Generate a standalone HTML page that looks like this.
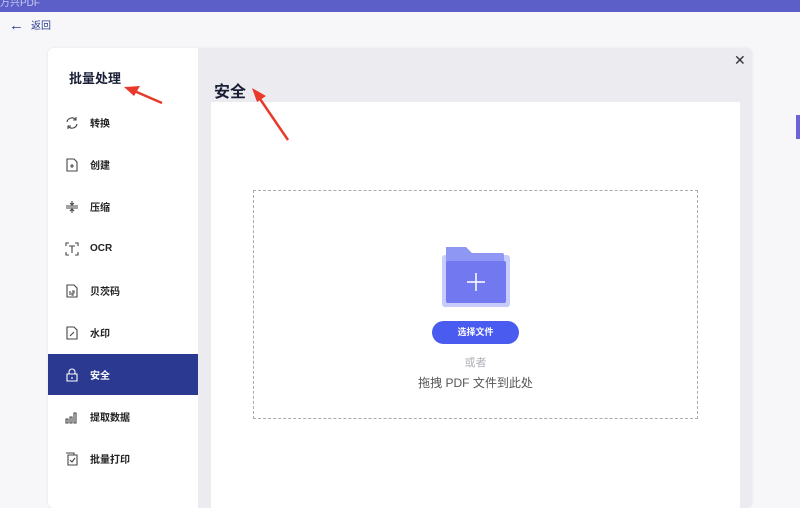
<!DOCTYPE html>
<html><head><meta charset="utf-8"><style>
*{margin:0;padding:0;box-sizing:border-box}
body{width:800px;height:500px;overflow:hidden;background:#f7f7fa;font-family:"Liberation Sans","Noto Sans CJK SC",sans-serif;position:relative}
.top{position:absolute;left:0;top:0;width:800px;height:12px;background:#5b5fc7}
.top span{position:absolute;top:-6px;color:#c8caf0;font-size:10px}
.back{position:absolute;left:9px;top:17px;font-size:10px;color:#2b3a8c}
.back b{font-size:15px;font-weight:bold;margin-right:7px;vertical-align:-1px}
.modal{position:absolute;left:48px;top:48px;width:704px;height:460px;background:#ebebf0;border-radius:6px;overflow:hidden;box-shadow:0 0 3px rgba(0,0,0,.08)}
.side{position:absolute;left:0;top:0;width:150px;height:100%;background:#fff}
.side h2{position:absolute;left:21px;top:20px;font-size:13px;color:#1a1f36;font-weight:bold}
.item{position:absolute;left:0;width:150px;height:41px;display:flex;align-items:center;padding-left:17px;font-size:10px;font-weight:bold;color:#222}
.item svg{width:14px;height:14px;margin-right:11px;fill:none;stroke:#444;stroke-width:1.1}
.item.act{background:#2b3990;color:#fff}
.item.act svg{stroke:#fff}
.title{position:absolute;left:166px;top:30px;font-size:16px;font-weight:bold;color:#1a1f36}
.close{position:absolute;left:686px;top:4px;font-size:14px;color:#333}
.panel{position:absolute;left:163px;top:54px;width:529px;height:420px;background:#fff}
.drop{position:absolute;left:42px;top:88px;width:445px;height:229px;border:1px dashed #aaa}
.btn{position:absolute;left:178px;top:130px;width:87px;height:23px;border-radius:12px;background:#4a5cf0;color:#fff;font-size:9px;font-weight:bold;text-align:center;line-height:23px}
.or{position:absolute;left:0;width:100%;text-align:center;top:163px;font-size:11px;color:#b0b0b8}
.dr{position:absolute;left:0;width:100%;text-align:center;top:183px;font-size:12px;color:#555}
.arrow{position:absolute}
</style></head><body>
<div class="top"><span style="left:0">万兴PDF</span></div>
<div class="back"><b>←</b>返回</div>
<div style="position:absolute;left:796px;top:115px;width:4px;height:24px;background:#6b63d6"></div>
<div class="modal">
 <div class="side">
  <h2>批量处理</h2>
  <div class="item" style="top:54px"><svg viewBox="0 0 14 14"><path d="M2 6a5 5 0 0 1 9-2M12 8a5 5 0 0 1-9 2M11 1v3H8M3 13v-3h3"/></svg>转换</div>
  <div class="item" style="top:96px"><svg viewBox="0 0 14 14"><path d="M2 1h7l3 3v9H2zM5 8h4M7 6v4"/></svg>创建</div>
  <div class="item" style="top:138px"><svg viewBox="0 0 14 14"><path d="M1 6h12M1 8h12M7 1v4M7 9v4M5 3l2 2 2-2M5 11l2-2 2 2"/></svg>压缩</div>
  <div class="item" style="top:180px"><svg viewBox="0 0 14 14"><path d="M1 4V1h3M10 1h3v3M13 10v3h-3M4 13H1v-3M4 4h6M7 4v7"/></svg>OCR</div>
  <div class="item" style="top:222px"><svg viewBox="0 0 14 14"><path d="M2 1h7l3 3v9H2zM5 7v4M7 7h2v2H7v2h2"/></svg>贝茨码</div>
  <div class="item" style="top:264px"><svg viewBox="0 0 14 14"><path d="M2 1h7l3 3v9H2zM5 10l4-4"/></svg>水印</div>
  <div class="item act" style="top:306px"><svg viewBox="0 0 14 14"><path d="M2 6h10v7H2zM4 6V4a3 3 0 0 1 6 0v2M7 9v2"/></svg>安全</div>
  <div class="item" style="top:348px"><svg viewBox="0 0 14 14"><path d="M1 9h2v4H1zM5 7h2v6H5zM9 3h2v10H9z"/></svg>提取数据</div>
  <div class="item" style="top:390px"><svg viewBox="0 0 14 14"><path d="M1 1h8v2M3 3h9v10H3zM5 8l2 2 3-4"/></svg>批量打印</div>
 </div>
 <div class="title">安全</div>
 <div class="close">✕</div>
 <div class="panel">
  <div class="drop">
   <svg style="position:absolute;left:186px;top:52px" width="72" height="66" viewBox="0 0 72 66">
    <rect x="2" y="12" width="68" height="52" rx="3" fill="#c7ccfb"/>
    <path d="M6 4h20l6 6h30a2 2 0 0 1 2 2v42H6z" fill="#8f97f5"/>
    <rect x="6" y="18" width="60" height="42" rx="2" fill="#7279f0"/>
    <path d="M36 30v18M27 39h18" stroke="#fff" stroke-width="1.5"/>
   </svg>
   <div class="btn">选择文件</div>
   <div class="or">或者</div>
   <div class="dr">拖拽 PDF 文件到此处</div>
  </div>
 </div>
</div>
<svg class="arrow" style="left:120px;top:82px" width="45" height="25"><path d="M42 21L12 8" stroke="#e8392b" stroke-width="2.5"/><path d="M4 5l16 -1l-6 10z" fill="#e8392b"/></svg>
<svg class="arrow" style="left:248px;top:86px" width="45" height="56"><path d="M40 54L10 10" stroke="#e8392b" stroke-width="2.5"/><path d="M4 2l14 8l-9 6z" fill="#e8392b"/></svg>
</body></html>
